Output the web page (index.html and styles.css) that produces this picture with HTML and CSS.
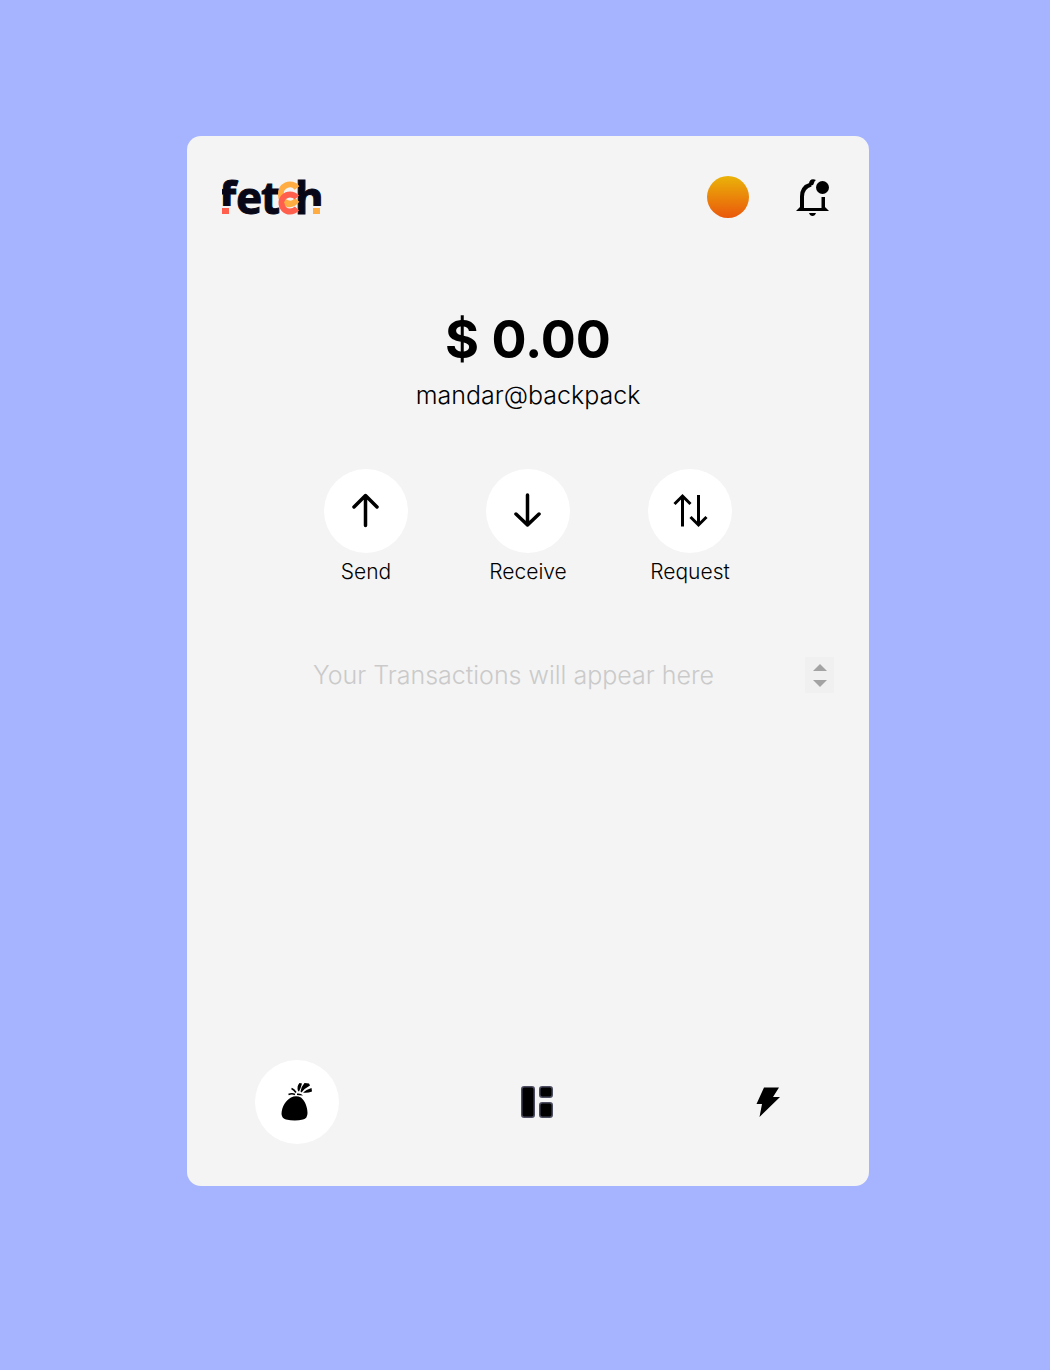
FILE: index.html
```html
<!DOCTYPE html>
<html lang="en">
<head>
<meta charset="utf-8">
<meta name="viewport" content="width=device-width, initial-scale=1">
<title>Fetch wallet</title>
<link rel="stylesheet" href="styles.css">
</head>
<body>
<main class="wallet">
  <header class="topbar">
    <svg class="logo" width="100" height="42" viewBox="0 0 100 42" role="img" aria-label="fetch">
      <g class="logo-text">
        <text x="-3" y="38">f</text>
        <text x="14" y="38">e</text>
        <text x="39" y="38">t</text>
        <text x="73" y="38">h</text>
      </g>
      <g fill="none" stroke-width="6">
        <path d="M75 12A9 9 0 0 0 59 19Q59 26 66 28Q71 29 75 24" stroke="#ffad42"/>
        <path d="M75 21.500Q72 18.500 68 18.500A8.500 8.500 0 0 0 68 35.500Q72 35.500 75 32.500" stroke="#ff5f4c"/>
        <path d="M63 25Q69 29 75 24" stroke="#ffad42" stroke-width="4"/>
      </g>
      <path d="M-6 10H0V42H-6zM-1 30h13v12h-13zM89 30h12v12h-12z" fill="#f4f4f4"/>
      <path d="M0 32h7v6H0z" fill="#ff5f4c"/>
      <path d="M91 32h7v6h-7z" fill="#ffad42"/>
    </svg>
    <div class="topbar-actions">
      <button class="avatar" aria-label="Account"></button>
      <button class="plain" aria-label="Notifications">
        <svg width="42" height="42" viewBox="0 0 42 42">
          <path d="M10 33V20.500C10 14 14 10 19 8.500" fill="none" stroke="#000" stroke-width="4"/>
          <path d="M17 10V8C17 4 20 2 24 4C22 5 22 8 21 9zM4 35L8 31V32H33V31L37 35H4zM29.500 21H33V33H29.500zM17 37H24Q23 40 20.500 40T17 37z"/>
          <circle cx="30.500" cy="11.500" r="6.500"/>
        </svg>
      </button>
    </div>
  </header>

  <section class="balance">
    <h1>$ 0.00</h1>
    <p>mandar@backpack</p>
  </section>

  <section class="actions">
    <button class="action">
      <span class="disc"><svg width="42" height="42" viewBox="0 0 42 42" class="arrow"><path d="M20.500 35.500V5.500M9 17L20.500 5.500L32 17"/></svg></span>
      <span>Send</span>
    </button>
    <button class="action">
      <span class="disc"><svg width="42" height="42" viewBox="0 0 42 42" class="arrow"><path d="M20.500 5V35M9 24L20.500 35L32 24"/></svg></span>
      <span>Receive</span>
    </button>
    <button class="action">
      <span class="disc"><svg width="42" height="42" viewBox="0 0 42 42" class="arrow swap"><path d="M13.500 36.500V7M5.500 14L13.500 6L21.500 14M29.500 5V35M21.500 27L29.500 35L37.500 27"/></svg></span>
      <span>Request</span>
    </button>
  </section>

  <div class="history">
    <input type="text" placeholder="Your Transactions will appear here" aria-label="Transactions">
    <div class="stepper">
      <button aria-label="Increase"><svg width="14" height="7" viewBox="0 0 14 7"><path d="M0 7L7 0L14 7z"/></svg></button>
      <button aria-label="Decrease"><svg width="14" height="7" viewBox="0 0 14 7"><path d="M0 0H14L7 7z"/></svg></button>
    </div>
  </div>

  <nav class="tabs" aria-label="Main">
    <button class="tab tab-active" aria-label="Wallet">
      <svg width="42" height="42" viewBox="0 0 42 42">
        <path d="M15 16.500Q20 14 25 16.500C29 20 31.500 26 31.500 32Q31.500 37.500 27 38.500Q19 40.500 10 38.500Q6 37.500 5.500 33C5.500 26 10 19 15 16.500z"/>
        <path d="M22 10Q20.500 5 23.500 2L26 2.500Q25 6.500 23 10.500zM24.500 10.500Q25.500 5 28.500 2L33 2.500L34 4.500Q29 7 25.500 11.500zM27 11.500Q30 8.500 35.500 7L36 10.500Q31 12.500 27 11.500zM21 12.500Q25 12 27 14.500Q23 14 21 14z"/>
        <path d="M12.500 13.500Q16 12 19 13.500M15.500 7.500Q18 8.500 20 11.500" fill="none" stroke="#000" stroke-width="1.500"/>
      </svg>
    </button>
    <button class="tab" aria-label="Dashboard">
      <svg width="42" height="42" viewBox="0 0 42 42" stroke="#4c4d60" stroke-width="1.500">
        <rect x="5.750" y="5.750" width="12.500" height="30.500" rx="2.500"/>
        <rect x="23.750" y="5.750" width="12.500" height="10.500" rx="2.500"/>
        <rect x="23.750" y="21.750" width="12.500" height="14.500" rx="2.500"/>
      </svg>
    </button>
    <button class="tab" aria-label="Activity">
      <svg width="42" height="42" viewBox="0 0 42 42"><path d="M17 6.500H32L26 16H33L12.500 36L15 23H9.500z"/></svg>
    </button>
  </nav>
</main>
</body>
</html>
```

FILE: styles.css
```css
* { box-sizing: border-box; }

body {
  margin: 0;
  min-height: 100vh;
  padding: 136px 181px 184px 187px;
  display: flex;
  background: #a6b3fe;
  color: #000;
  font-family: Inter, "Liberation Sans", sans-serif;
  font-weight: 300;
}

button {
  padding: 0;
  border: 0;
  background: none;
  color: inherit;
  font: inherit;
  cursor: pointer;
}

svg { display: block; }

.wallet {
  flex: 1;
  min-width: 0;
  display: flex;
  flex-direction: column;
  padding: 40px 0 42px;
  border-radius: 14px;
  background: #f4f4f4;
}

.topbar {
  display: flex;
  justify-content: space-between;
  align-items: center;
  padding: 0 35px;
}

.logo { overflow: visible; }

.logo-text {
  fill: #080717;
  stroke: #080717;
  stroke-width: 1px;
  font-family: "Noto Sans", sans-serif;
  font-size: 44px;
  font-weight: 700;
}

.topbar-actions { display: flex; gap: 43px; }

.avatar {
  width: 42px;
  height: 42px;
  border-radius: 50%;
  background: linear-gradient(#eab308, #ea580c);
}

.balance {
  margin-top: 89px;
  text-align: center;
}

.balance h1 {
  margin: 0;
  font-size: 52px;
  line-height: 66px;
  font-weight: 700;
}

.balance p {
  margin: 4px 0 0;
  font-size: 25px;
  line-height: 36px;
}

.actions {
  display: flex;
  justify-content: center;
  gap: 78px;
  margin-top: 56px;
}

.action {
  width: 84px;
  display: flex;
  flex-direction: column;
  align-items: center;
  gap: 4px;
  font-size: 21px;
  line-height: 30px;
}

.disc {
  width: 84px;
  height: 84px;
  display: grid;
  place-items: center;
  border-radius: 50%;
  background: #fff;
}

.arrow {
  fill: none;
  stroke: #000;
  stroke-width: 3.5px;
  stroke-linecap: round;
  stroke-linejoin: round;
}

.swap {
  stroke-width: 3px;
  stroke-linecap: butt;
  stroke-linejoin: miter;
}

.history {
  display: flex;
  margin: 70px 35px 0;
}

.history input {
  flex: 1;
  min-width: 0;
  height: 36px;
  padding: 0;
  border: 0;
  background: none;
  color: #000;
  font: inherit;
  font-size: 25px;
  text-align: center;
}

.history input::placeholder { color: #cacaca; opacity: 1; }

.stepper {
  width: 29px;
  height: 36px;
  display: flex;
  flex-direction: column;
  align-items: center;
  justify-content: center;
  gap: 9px;
  background: #f0f0f0;
  fill: #a3a3a3;
}

.tabs {
  display: flex;
  justify-content: space-between;
  margin-top: auto;
  padding: 0 68px;
}

.tab {
  width: 66px;
  height: 84px;
  display: grid;
  place-items: center;
}

.tab-active {
  width: 84px;
  border-radius: 50%;
  background: #fff;
}
```
